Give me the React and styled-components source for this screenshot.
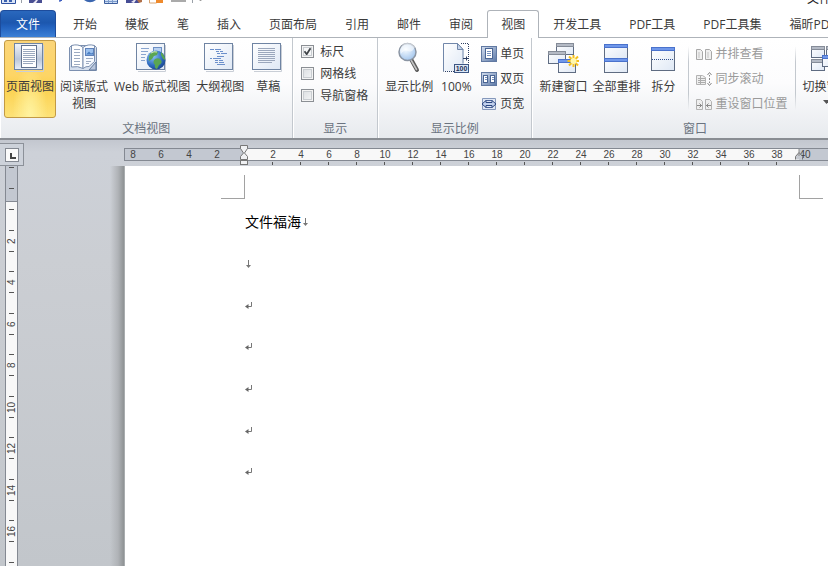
import React from "react";
import styled, { createGlobalStyle, css } from "styled-components";

const GlobalStyle = createGlobalStyle`
  * { box-sizing: border-box; }
  html, body, #root { height: 100%; }
  body {
    margin: 0;
    overflow: hidden;
    background: #fff;
    color: #3b3b3b;
    font-family: "Open Sans", "Noto Sans CJK SC", sans-serif;
    font-size: 12px;
    line-height: 17px;
  }
  button, input { font: inherit; color: inherit; margin: 0; }
  svg { display: block; flex: none; }
`;

const Window = styled.div`
  display: flex;
  flex-direction: column;
  height: 100%;
  overflow: hidden;
`;

/* ---------- title bar and tabs ---------- */

const TitleBar = styled.header`
  display: flex;
  flex: none;
  justify-content: space-between;
  align-items: flex-start;
  height: 10px;
  overflow: hidden;
`;

const TitleClip = styled.div`
  display: flex;
  align-items: flex-end;
  width: 21px;
  height: 7px;
  color: #222;
  white-space: nowrap;
`;

const TabBar = styled.nav`
  display: flex;
  flex: none;
  height: 28px;
  overflow: hidden;
  box-shadow: inset 0 -1px #aeb3b9;
`;

const Tab = styled.button`
  flex: none;
  height: 28px;
  padding: 0 14px;
  border: 0;
  background: transparent;
  white-space: nowrap;
  ${(p) =>
    p.$kind === "file" &&
    css`
      width: 56px;
      height: 27px;
      margin-right: 3px;
      color: #fff;
      border: 1px solid #1d4c9c;
      border-bottom: 0;
      border-radius: 4px 4px 0 0;
      background: linear-gradient(#2a68bd, #1c57ae 45%, #2261bd 60%, #3c80d6);
    `}
  ${(p) =>
    p.$kind === "active" &&
    css`
      padding: 0 13px;
      border: 1px solid #aeb3b9;
      border-bottom: 0;
      border-radius: 3px 3px 0 0;
      background: #fff;
    `}
`;

/* ---------- ribbon ---------- */

const Ribbon = styled.div`
  display: flex;
  flex: none;
  overflow: hidden;
  border-bottom: 2px solid #898d93;
  background: linear-gradient(#fff, #fcfcfd 45%, #e7eaee);
`;

const Group = styled.section`
  display: flex;
  flex-direction: column;
  flex: none;
  padding-top: 2px;
  border-right: 1px solid #c3c8ce;
  box-shadow: inset 1px 0 #fff;
`;

const GroupBody = styled.div`
  display: flex;
  gap: ${(p) => p.$gap || "1px"};
  height: 78px;
  padding: ${(p) => p.$pad || "0 5px"};
`;

const GroupTitle = styled.h2`
  margin: 0;
  padding-top: 1px;
  font-size: 12px;
  font-weight: 400;
  line-height: 19px;
  text-align: center;
  color: #6a7380;
`;

const BigButton = styled.button`
  display: flex;
  flex-direction: column;
  align-items: center;
  gap: 5px;
  flex: none;
  min-width: 40px;
  height: 78px;
  padding: 0 1px;
  border: 1px solid transparent;
  border-radius: 3px;
  background: transparent;
  ${(p) =>
    p.$on &&
    css`
      border-color: #c29a45;
      background: radial-gradient(ellipse at 50% 100%, #fff3a0, transparent 50%),
        linear-gradient(#fbd579, #fdd566 45%, #fbd04f 60%, #fde277);
    `}
`;

const BigLabel = styled.span`
  white-space: pre-line;
  text-align: center;
`;

const CheckList = styled.div`
  display: flex;
  flex-direction: column;
`;

const CheckRow = styled.label`
  display: flex;
  align-items: center;
  gap: 6px;
  height: 22px;
`;

const Check = styled.input`
  appearance: none;
  width: 13px;
  height: 13px;
  border: 1px solid #8b8f94;
  background: linear-gradient(135deg, #d9dcdf, #f6f7f8);
  box-shadow: inset 0 0 0 1px #f4f4f4, inset 0 0 0 2px #c9cdd1;
  &:checked {
    background: #f6f7f8
      url("data:image/svg+xml,%3Csvg xmlns='http://www.w3.org/2000/svg' viewBox='0 0 11 11'%3E%3Cpath d='M2.5 5.2l2.2 3 3.8-6' fill='none' stroke='%23404448' stroke-width='1.8'/%3E%3C/svg%3E");
  }
`;

const SmallList = styled.div`
  display: flex;
  flex-direction: column;
  padding: ${(p) => p.$pad || "0"};
`;

const SmallButton = styled.button`
  display: flex;
  align-items: center;
  gap: 3px;
  height: 25px;
  padding: 0;
  border: 0;
  background: transparent;
  white-space: nowrap;
  &:disabled { color: #9a9a9a; }
`;

const Divider = styled.div`
  width: 1px;
  margin: 6px 3px 8px 4px;
  background: linear-gradient(transparent, #c3c8ce 25%, #c3c8ce 75%, transparent);
`;

/* ---------- document area ---------- */

const Workspace = styled.main`
  display: flex;
  flex: 1;
  min-height: 0;
  overflow: hidden;
  background: linear-gradient(#c3c7cf, #cdd1d8 12px, #cbced3 120px, #c2c6cb);
`;

const SideColumn = styled.div`
  display: flex;
  flex-direction: column;
  flex: none;
  width: 24px;
  padding-top: 3px;
`;

const TabStop = styled.button`
  display: grid;
  place-items: center;
  flex: none;
  width: 24px;
  height: 23px;
  padding: 0;
  border: 1px solid #8c9199;
  border-left-width: 0;
  background: #cdd2da;
`;

const VRuler = styled.div`
  flex: 1;
  min-height: 0;
  width: 13px;
  margin-left: 5px;
  overflow: hidden;
  border: solid #848992;
  border-width: 0 1px;
  background: linear-gradient(#c3c8d1 35px, #848992 35px, #848992 36px, #f8f8f8 36px);
`;

const VCells = styled.div`
  display: grid;
  grid-template-rows: 12px 42px;
  grid-auto-rows: 41px 42px;
`;

const VCell = styled.div`
  display: flex;
  flex-direction: column;
  align-items: center;
  justify-content: center;
  color: #444;
  font: 10px/10px "Liberation Sans", sans-serif;
  &::before, &::after {
    content: "";
    width: 5px;
    height: 1px;
    background: #555;
  }
  &:first-child { justify-content: flex-start; padding-top: 1px; }
  &:first-child::after { display: none; }
  &:first-child span { display: none; }
`;

const VNumber = styled.span`
  height: 20px;
  writing-mode: vertical-rl;
  transform: rotate(180deg);
  text-align: center;
`;

const DocColumn = styled.div`
  display: flex;
  flex-direction: column;
  flex: 1;
  min-width: 0;
`;

const RulerRow = styled.div`
  flex: none;
  height: 26px;
  padding: 8px 0 0 100px;
`;

const HRuler = styled.div`
  position: relative;
  height: 18px;
`;

const HScale = styled.div`
  display: flex;
  height: 13px;
  overflow: hidden;
  border: solid #848992;
  border-width: 1px 0 1px 1px;
  background: linear-gradient(90deg, #c3c8d1 120px, #f8f8f8 120px, #f8f8f8 674px, #c3c8d1 674px);
`;

const HTicks = styled.div`
  display: flex;
  height: 5px;
  padding-left: 134px;
`;

const HCell = styled.span`
  flex: none;
  width: 28px;
  text-align: center;
  font: 10px/11px "Liberation Sans", sans-serif;
  color: #444;
  &:first-child { width: 16px; }
  &:nth-child(2) { margin-left: 6px; }
`;

const HTick = styled.i`
  flex: none;
  width: 28px;
  height: 5px;
  background: linear-gradient(#555, #555) 50% 1px / 1px 3px no-repeat;
`;

const IndentMarker = styled.div`
  position: absolute;
  top: -4px;
  left: ${(p) => p.$left};
`;

const PageRow = styled.div`
  display: flex;
  flex: 1;
  min-height: 0;
`;

const Gutter = styled.div`
  flex: none;
  width: 101px;
  border-right: 1px solid #a9adaf;
  background: linear-gradient(270deg, #8e9294, #b0b3b7 6px, transparent 14px);
`;

const Page = styled.article`
  flex: 1;
  min-width: 0;
  overflow: hidden;
  padding-top: 9px;
  background: #fff;
`;

const MarginMarks = styled.div`
  display: flex;
  gap: 554px;
  padding-left: 96px;
`;

const Corner = styled.div`
  flex: none;
  width: 24px;
  height: 24px;
  border: 0 solid #a2a2a2;
  border-bottom-width: 1px;
  ${(p) => (p.$side === "left" ? "border-right-width: 1px;" : "border-left-width: 1px;")}
`;

const TextBody = styled.div`
  display: grid;
  grid-auto-rows: 42px 42px 41px;
  padding: 2px 0 0 120px;
`;

const Line = styled.p`
  display: flex;
  align-items: center;
  gap: 1px;
  margin: 0;
  font-size: 14px;
  line-height: 18px;
  color: #000;
`;

/* ---------- drawings ---------- */

const HiddenSvg = styled.svg`
  position: absolute;
`;

const Paints = () => (
  <HiddenSvg width="0" height="0" aria-hidden="true">
    <defs>
      <linearGradient id="paper" x1="0" y1="0" x2="1" y2="1">
        <stop offset="0" stopColor="#fff" />
        <stop offset="1" stopColor="#dfe8f5" />
      </linearGradient>
      <linearGradient id="tile" x1="0" y1="0" x2="1" y2="1">
        <stop offset="0" stopColor="#d3deef" />
        <stop offset="1" stopColor="#5c78a6" />
      </linearGradient>
      <linearGradient id="sheen" x1="0" y1="0" x2="0" y2="1">
        <stop offset="0" stopColor="#f1f4f9" />
        <stop offset=".6" stopColor="#bcc7d9" />
        <stop offset="1" stopColor="#e9eef6" />
      </linearGradient>
      <radialGradient id="lens" cx=".4" cy=".35" r=".7">
        <stop offset="0" stopColor="#f6fbff" />
        <stop offset="1" stopColor="#9fc3ec" />
      </radialGradient>
      <radialGradient id="globe" cx=".35" cy=".3" r=".8">
        <stop offset="0" stopColor="#8fc6f4" />
        <stop offset=".6" stopColor="#2f6cc0" />
        <stop offset="1" stopColor="#173f86" />
      </radialGradient>
    </defs>
  </HiddenSvg>
);

const Icon = ({ children, size = 32 }) => (
  <svg width={size} height={size} viewBox={`0 0 ${size} ${size}`} aria-hidden="true">
    {children}
  </svg>
);

const Pane = ({ x, y, w, h, bar = "#6f97ea", edge = "#4a72cc" }) => (
  <g>
    <rect x={x + 0.5} y={y + 0.5} width={w - 1} height={h - 1} fill="url(#paper)" stroke="#5f6c82" />
    <rect x={x + 0.5} y={y + 0.5} width={w - 1} height="3" fill={bar} stroke={edge} />
  </g>
);

const GreyPane = (props) => <Pane {...props} bar="#b4bac5" edge="#858c98" />;

const PageFrame = ({ fill = "url(#paper)" }) => (
  <>
    <path d="M29.5 4v26.5H2" fill="none" stroke="#c9ced6" />
    <rect x=".5" y="2.5" width="28" height="26" fill={fill} stroke="#6f84a3" />
  </>
);

const icons = {
  print: (
    <Icon>
      <PageFrame fill="url(#sheen)" />
      <rect x="7.5" y="4.5" width="15" height="22" fill="#fff" stroke="#62738f" />
      <path d="M9 8.5h12M9 10.5h12M9 12.5h12M9 14.5h12M9 16.5h12M9 18.5h12M9 20.5h12M9 22.5h10" stroke="#9aa8be" />
    </Icon>
  ),
  reading: (
    <Icon>
      <path d="M1.5 6.5l2-2h23l2 2v23h-27z" fill="#d5dfee" stroke="#7c90b0" />
      <path d="M3.5 4.5q7-2 11.5 2v21q-5-3-11.5-1.5z" fill="#fff" stroke="#7c90b0" />
      <path d="M26.5 4.5q-7-2-11.5 2v21q3-2.5 6-2l5.5-5z" fill="#f7faff" stroke="#7c90b0" />
      <path d="M6 8.5h6M6 11.5h6M6 14.5h6M6 17.5h6M6 20.5h6M6 23.5h6M18 17.5h7M18 20.5h5M18 22.5h3" stroke="#9dabc2" />
      <rect x="17.5" y="7.5" width="8" height="7" fill="#9cc1ee" stroke="#5f82ba" />
      <path d="M18 13.5l3-3 2 2 2-1v2z" fill="#4c80c4" />
      <path d="M21 29l7-8v8z" fill="#b8c6dd" stroke="#667c9d" />
    </Icon>
  ),
  web: (
    <Icon>
      <PageFrame />
      <path d="M5 7.5h8M5 10.5h7M5 13.5h5M5 16.5h4M5 19.5h4" stroke="#8aa5cf" />
      <rect x="17.5" y="6.5" width="8" height="8" fill="#b9d2f1" stroke="#6c8fc4" />
      <circle cx="20" cy="19" r="9.5" fill="url(#globe)" />
      <path d="M14 13q4-4 8-2l-1 3-3 1-2 3-3 2q-1-4 1-7zM19 18q4-2 6 1t-2 5l-2 4q-3-1-2-4-3-3 0-6zM25 11q4 3 4 8l-2-1-2-4z" fill="#5aa552" />
      <path d="M15 12q3-2 6-1" stroke="#d5ebb8" fill="none" />
    </Icon>
  ),
  outline: (
    <Icon>
      <PageFrame />
      <path d="M6 8.5h4M11 8.5h6M12 10.5h3M16 10.5h3M13 12.5h3M17 12.5h6M6 17.5h2M9 17.5h8M13 15.5h7M11 19.5h3M15 19.5h4M11 21.5h3M15 21.5h5M13 23.5h8" stroke="#6c90cb" />
    </Icon>
  ),
  draft: (
    <Icon>
      <PageFrame />
      <path d="M6 7.5h17M6 9.5h17M6 11.5h17M6 13.5h17M6 15.5h17M6 17.5h17M6 19.5h17M6 21.5h14" stroke="#9ba7bc" />
    </Icon>
  ),
  zoom: (
    <Icon>
      <path d="M18.5 19l5.5 10" stroke="#5c5c5c" strokeWidth="4" strokeLinecap="round" />
      <path d="M18 19l5.5 9.5" stroke="#c4c4c4" strokeWidth="1.5" strokeLinecap="round" />
      <circle cx="14.5" cy="11" r="8.5" fill="url(#lens)" stroke="#8b95a3" strokeWidth="1.5" />
      <path d="M8 13q3-5 7-3t7-4q-3-4-8-4t-7 7z" fill="#fff" opacity=".55" />
    </Icon>
  ),
  hundred: (
    <Icon>
      <path d="M3.5 2.5h14l6 6v22h-20z" fill="url(#paper)" />
      <path d="M21 2.5h7.5v28H3.5" fill="none" stroke="#2e3f62" strokeDasharray="1 1" />
      <path d="M3.5 30V2.5h14l5.5 6v14" fill="none" stroke="#7187aa" />
      <path d="M17.5 2.5v6h5.5z" fill="#c7d5ea" stroke="#7187aa" />
      <path d="M23 17.5h5M26.5 15.5v4" stroke="#2e3f62" />
      <rect x="14.5" y="23.5" width="14" height="8" fill="#dbe7f7" stroke="#3d5683" />
      <text x="21.5" y="30" textAnchor="middle" fontSize="7" fontWeight="700" fontFamily="Liberation Sans, sans-serif" fill="#1f3155">100</text>
    </Icon>
  ),
  newWindow: (
    <Icon>
      <GreyPane x={9} y={2} w={18} h={12} />
      <GreyPane x={1} y={10} w={18} h={13} />
      <Pane x={11} y={18} w={18} h={14} />
      <path d="M26.5 14v12M20.5 20h12M22 15.5l9 9M31 15.5l-9 9" stroke="#f5c01e" strokeWidth="2" />
      <circle cx="26.5" cy="20" r="3" fill="#fff8b0" />
    </Icon>
  ),
  arrange: (
    <Icon>
      <Pane x={4} y={3} w={24} h={15} />
      <Pane x={4} y={17} w={24} h={15} />
    </Icon>
  ),
  split: (
    <Icon>
      <Pane x={4} y={6} w={24} h={24} />
      <path d="M5 18.5h22" stroke="#31518f" strokeDasharray="1 1" />
    </Icon>
  ),
  switchWin: (
    <Icon>
      <GreyPane x={1} y={5} w={14} h={12} />
      <GreyPane x={1} y={18} w={14} h={12} />
      <GreyPane x={16} y={5} w={14} h={12} />
      <Pane x={12} y={14} w={14} h={12} />
    </Icon>
  ),
  onePage: (
    <Icon size={16}>
      <rect x=".5" y=".5" width="15" height="15" fill="url(#tile)" stroke="#6179a2" />
      <rect x="4.5" y="2.5" width="7" height="10" fill="#fff" stroke="#4a6594" />
      <path d="M6 5.5h4M6 7.5h4M6 9.5h4" stroke="#7590bd" />
    </Icon>
  ),
  twoPages: (
    <Icon size={16}>
      <rect x=".5" y="1.5" width="15" height="13" fill="url(#tile)" stroke="#6179a2" />
      <rect x="2.5" y="4.5" width="4" height="7" fill="#fff" stroke="#4a6594" />
      <rect x="9.5" y="4.5" width="4" height="7" fill="#fff" stroke="#4a6594" />
      <path d="M4 6.5h2M4 8.5h2M11 6.5h2M11 8.5h2" stroke="#7590bd" />
    </Icon>
  ),
  pageWidth: (
    <Icon size={16}>
      <path d="M1.5 2.5h13v11h-13z" fill="#dfe7f5" stroke="#8598bb" />
      <path d="M5 4.5h6M5 11.5h6" stroke="#4c669a" />
      <path d="M1 8l4-3.5v2h6v-2L15 8l-4 3.5v-2H5v2z" fill="#c3d2ee" stroke="#2c4780" />
    </Icon>
  ),
  sideBySide: (
    <Icon size={16}>
      <path d="M.5 3.5h4l2 2v8h-6zM9.5 3.5h4l2 2v8h-6z" fill="#efefef" stroke="#a8a8a8" />
      <path d="M3 6v6M12 6v6" stroke="#d9d9d9" strokeWidth="2" />
    </Icon>
  ),
  syncScroll: (
    <Icon size={16}>
      <path d="M.5 4.5h6l3 2v7h-9z" fill="#efefef" stroke="#b3b3b3" />
      <path d="M2 7.5h2M5 7.5h4M2 9.5h2M5 9.5h4M2 11.5h2M5 11.5h4M4.5 5v8" stroke="#acacac" />
      <path d="M13.5 4v1.5M13.5 7v2M13.5 10.5V12M11.5 4l2-2.5 2 2.5M11.5 12l2 2.5 2-2.5" stroke="#888" fill="none" />
    </Icon>
  ),
  resetPos: (
    <Icon size={16}>
      <path d="M.5 3.5h4l2 2v8h-6zM9.5 3.5h4l2 2v8h-6z" fill="#efefef" stroke="#b3b3b3" />
      <path d="M1 9.5h5M3.5 7.5l2 2-2 2M15 9.5h-5M12.5 7.5l-2 2 2 2" stroke="#888" fill="none" />
    </Icon>
  ),
};

const QuickAccess = () => (
  <svg width="210" height="6" viewBox="0 0 210 6" aria-label="快速访问工具栏">
    <path d="M1.5 0v3.5h14V0" fill="#dbe5f6" stroke="#2d50a0" />
    <path d="M4 0h3v2H4zM9 0h3v2H9z" fill="#3d62b0" />
    <path d="M21.5 0v3M192.5 0v3" stroke="#9aa0a8" />
    <path d="M29 0h13v3H29z" fill="#494f92" />
    <path d="M33 3l3-3h2l-2 3z" fill="#e9e6f2" />
    <path d="M59 1l3-1-1 1z" fill="#3f5fc0" stroke="#3f5fc0" />
    <path d="M84 0h12q-6 4.5-12 0z" fill="#3b66b0" />
    <path d="M104.5 0v3.5h13V0" fill="#cfdff5" stroke="#3d5e9d" />
    <path d="M108.5 0v3M112.5 0v3M105 1.5h12" stroke="#7c9bcc" />
    <path d="M126 0h13v3h-13z" fill="#464d95" />
    <path d="M131 2l3-2h2l-2 3z" fill="#e9e6f2" />
    <path d="M137 0h5v2l-3 1z" fill="#b0704a" />
    <path d="M149.5 0v3h7V0" fill="#fff" stroke="#d8a777" />
    <path d="M156 0h7v3h-7z" fill="#ef8a2c" />
    <path d="M171 1h15" stroke="#aaa" strokeWidth="2" />
    <path d="M199 0h3l-1.5 1z" fill="#888" />
  </svg>
);

const DropArrow = () => (
  <svg width="7" height="4" viewBox="0 0 7 4" aria-hidden="true">
    <path d="M0 0h7L3.5 4z" fill="#555" />
  </svg>
);

const DownMark = () => (
  <svg width="7" height="10" viewBox="0 0 7 10" aria-hidden="true">
    <path d="M3.5 1v7" stroke="#777" />
    <path d="M1 6h5L3.5 9z" fill="#777" />
  </svg>
);

const ReturnMark = () => (
  <svg width="8" height="8" viewBox="0 0 8 8" aria-hidden="true">
    <path d="M6.5 0v4.5H2" stroke="#777" fill="none" />
    <path d="M0 4.5L3.5 2v5z" fill="#666" />
  </svg>
);

const LeftIndent = () => (
  <svg width="10" height="22" viewBox="0 0 10 22" aria-hidden="true">
    <path d="M1.5 1.5h7v3L5.5 9l3 3.5v3h-7v-3l3-3.5-3-4.5z" fill="#f0f1f3" stroke="#777" />
    <rect x="1.5" y="16.5" width="7" height="4" fill="#f0f1f3" stroke="#777" />
  </svg>
);

const RightIndent = () => (
  <svg width="10" height="22" viewBox="0 0 10 22" aria-hidden="true">
    <path d="M1.5 15.5v-3L5 8.5l3.5 4v3" fill="#c5c9d0" stroke="#777" />
    <path d="M5 5v7" stroke="#8a8a8a" />
  </svg>
);

/* ---------- content ---------- */

const tabs = ["文件", "开始", "模板", "笔", "插入", "页面布局", "引用", "邮件", "审阅", "视图", "开发工具", "PDF工具", "PDF工具集", "福昕PDF"];
const leftScale = [8, 6, 4, 2, ""];
const rightScale = Array.from({ length: 20 }, (_, i) => (i + 1) * 2);
const verticalScale = ["", "", ...Array.from({ length: 12 }, (_, i) => (i + 1) * 2)];

const Big = ({ icon, label, on, menu }) => (
  <BigButton type="button" $on={on} aria-pressed={on}>
    {icons[icon]}
    <BigLabel>{label}</BigLabel>
    {menu && <DropArrow />}
  </BigButton>
);

const Small = ({ icon, label, disabled }) => (
  <SmallButton type="button" disabled={disabled}>
    {icons[icon]}
    <span>{label}</span>
  </SmallButton>
);

const CheckItem = ({ label, checked }) => (
  <CheckRow>
    <Check type="checkbox" defaultChecked={checked} />
    {label}
  </CheckRow>
);

const tabKind = (name) => (name === "文件" ? "file" : name === "视图" ? "active" : undefined);

export default function App() {
  return (
    <Window>
      <GlobalStyle />
      <Paints />
      <TitleBar>
        <QuickAccess />
        <TitleClip>文件</TitleClip>
      </TitleBar>
      <TabBar>
        {tabs.map((name) => (
          <Tab key={name} type="button" $kind={tabKind(name)}>{name}</Tab>
        ))}
      </TabBar>
      <Ribbon>
        <Group>
          <GroupBody $gap="2px" $pad="0 4px">
            <Big icon="print" label="页面视图" on />
            <Big icon="reading" label={"阅读版式\n视图"} />
            <Big icon="web" label="Web 版式视图" />
            <Big icon="outline" label="大纲视图" />
            <Big icon="draft" label="草稿" />
          </GroupBody>
          <GroupTitle>文档视图</GroupTitle>
        </Group>
        <Group>
          <GroupBody $pad="0 9px 0 8px">
            <CheckList>
              <CheckItem label="标尺" checked />
              <CheckItem label="网格线" />
              <CheckItem label="导航窗格" />
            </CheckList>
          </GroupBody>
          <GroupTitle>显示</GroupTitle>
        </Group>
        <Group>
          <GroupBody $pad="0 7px 0 5px">
            <Big icon="zoom" label="显示比例" />
            <Big icon="hundred" label="100%" />
            <SmallList $pad="1px 0 0 4px">
              <Small icon="onePage" label="单页" />
              <Small icon="twoPages" label="双页" />
              <Small icon="pageWidth" label="页宽" />
            </SmallList>
          </GroupBody>
          <GroupTitle>显示比例</GroupTitle>
        </Group>
        <Group>
          <GroupBody>
            <Big icon="newWindow" label="新建窗口" />
            <Big icon="arrange" label="全部重排" />
            <Big icon="split" label="拆分" />
            <Divider />
            <SmallList $pad="1px 3px 0">
              <Small icon="sideBySide" label="并排查看" disabled />
              <Small icon="syncScroll" label="同步滚动" disabled />
              <Small icon="resetPos" label="重设窗口位置" disabled />
            </SmallList>
            <Divider />
            <Big icon="switchWin" label="切换窗口" menu />
          </GroupBody>
          <GroupTitle>窗口</GroupTitle>
        </Group>
      </Ribbon>
      <Workspace>
        <SideColumn>
          <TabStop type="button" aria-label="左对齐式制表符">
            <svg width="14" height="14" viewBox="0 0 14 14" aria-hidden="true">
              <rect x=".5" y=".5" width="13" height="13" fill="#fafafa" stroke="#848992" />
              <path d="M6 5v5h5" fill="none" stroke="#444" strokeWidth="2" />
            </svg>
          </TabStop>
          <VRuler>
            <VCells>
              {verticalScale.map((n, i) => (
                <VCell key={i}><VNumber>{n}</VNumber></VCell>
              ))}
            </VCells>
          </VRuler>
        </SideColumn>
        <DocColumn>
          <RulerRow>
            <HRuler>
              <HScale>
                {[...leftScale, ...rightScale].map((n, i) => (
                  <HCell key={i}>{n}</HCell>
                ))}
              </HScale>
              <HTicks>
                {rightScale.slice(0, 19).map((n) => <HTick key={n} />)}
              </HTicks>
              <IndentMarker $left="115px"><LeftIndent /></IndentMarker>
              <IndentMarker $left="670px"><RightIndent /></IndentMarker>
            </HRuler>
          </RulerRow>
          <PageRow>
            <Gutter />
            <Page>
              <MarginMarks>
                <Corner $side="left" />
                <Corner $side="right" />
              </MarginMarks>
              <TextBody>
                <Line>文件福海<DownMark /></Line>
                <Line><DownMark /></Line>
                <Line><ReturnMark /></Line>
                <Line><ReturnMark /></Line>
                <Line><ReturnMark /></Line>
                <Line><ReturnMark /></Line>
                <Line><ReturnMark /></Line>
              </TextBody>
            </Page>
          </PageRow>
        </DocColumn>
      </Workspace>
    </Window>
  );
}
